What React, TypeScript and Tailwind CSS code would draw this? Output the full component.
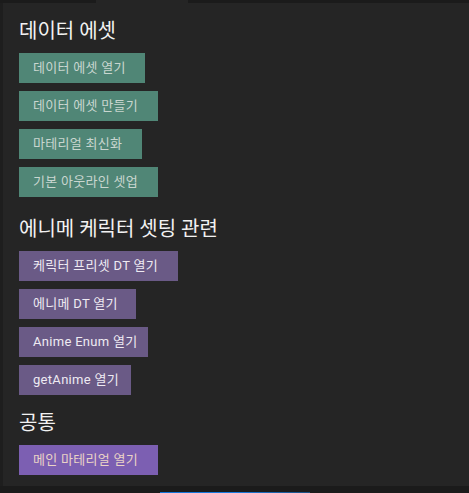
const font = { fontFamily: "Roboto, 'Noto Sans CJK KR', 'Noto Sans', sans-serif" };

type Btn = { label: string; w: string };

const dataButtons: Btn[] = [
  { label: "데이터 에셋 열기", w: "w-[126px]" },
  { label: "데이터 에셋 만들기", w: "w-[139px]" },
  { label: "마테리얼 최신화", w: "w-[123px]" },
  { label: "기본 아웃라인 셋업", w: "w-[139px]" },
];

const animeButtons: Btn[] = [
  { label: "케릭터 프리셋 DT 열기", w: "w-[159px]" },
  { label: "에니메 DT 열기", w: "w-[117px]" },
  { label: "Anime Enum 열기", w: "w-[129px]" },
  { label: "getAnime 열기", w: "w-[112px]" },
];

function Section({
  title,
  buttons,
  btnClass,
  className,
}: {
  title: string;
  buttons: Btn[];
  btnClass: string;
  className?: string;
}) {
  return (
    <div className={className}>
      <h2 className="h-[28px] text-[20px] leading-[28px] text-[#f2f2f2]">{title}</h2>
      <div className="mt-[8px] flex flex-col gap-[8px]">
        {buttons.map((b) => (
          <div
            key={b.label}
            className={`flex h-[30px] items-center whitespace-nowrap pl-[14px] text-[13px] tracking-[0.3px] ${b.w} ${btnClass}`}
          >
            {b.label}
          </div>
        ))}
      </div>
    </div>
  );
}

export default function App() {
  return (
    <div className="flex h-[493px] w-[469px] flex-col bg-[#1b1b1b]" style={font}>
      <div className="flex h-[3px] shrink-0">
        <div className="w-[96px]" />
        <div className="w-[92px] bg-[#252525]" />
      </div>
      <div className="flex h-[483px] shrink-0">
        <div className="w-[3px] bg-[#1e1e1e]" />
        <div className="flex-1 bg-[#252525] pl-[16px] pt-[14px]">
          <Section
            title="데이터 에셋"
            buttons={dataButtons}
            btnClass="bg-[#508676] text-[#c9d6d0]"
          />
          <Section
            title="에니메 케릭터 셋팅 관련"
            buttons={animeButtons}
            btnClass="bg-[#6a5a86] text-[#eeeaf2]"
            className="mt-[18px]"
          />
          <Section
            title="공통"
            buttons={[{ label: "메인 마테리얼 열기", w: "w-[139px]" }]}
            btnClass="bg-[#7c5fb2] text-[#ead3c6]"
            className="mt-[14px]"
          />
        </div>
      </div>
      <div className="flex flex-1 flex-col justify-end">
        <div className="ml-[160px] h-[1px] w-[150px] bg-gradient-to-r from-[#1273d6] via-[#1a7be0] to-[#1b4f80]" />
      </div>
    </div>
  );
}
